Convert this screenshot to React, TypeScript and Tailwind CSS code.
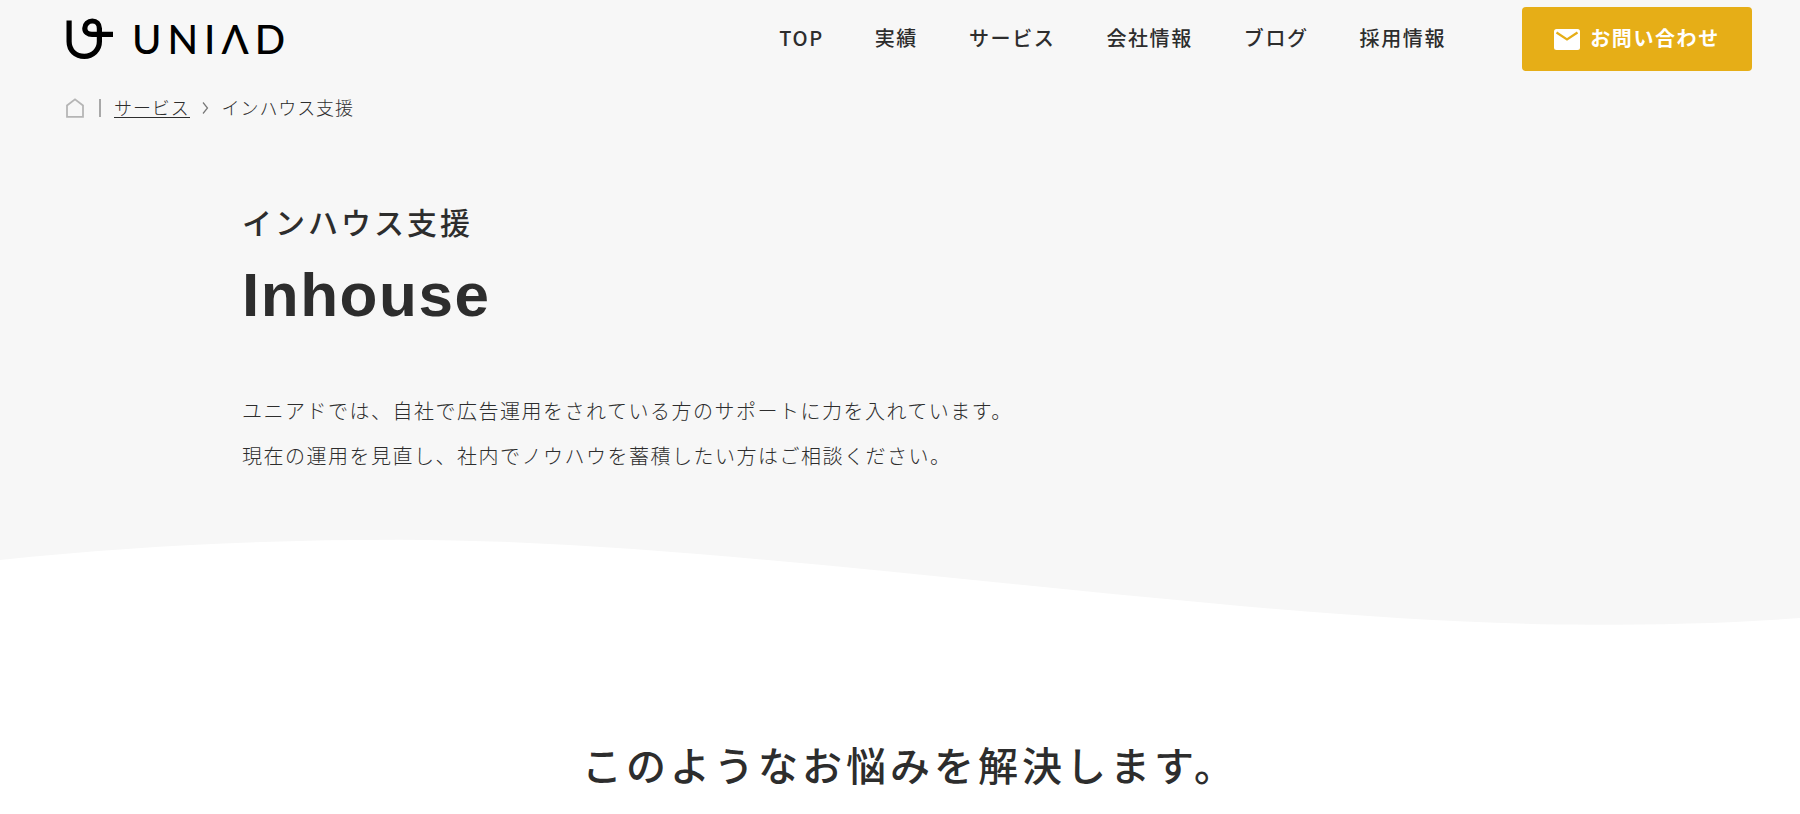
const navItems = ["TOP", "実績", "サービス", "会社情報", "ブログ", "採用情報"];

function Logo() {
  return (
    <a href="#" aria-label="UNIAD" className="flex items-center gap-[18px] text-black">
      <svg width="48" height="42" viewBox="0 0 48 42" fill="none" stroke="currentColor" strokeWidth="5.2">
        <path d="M3.1 2.5V23.5C3.1 32.5 9.8 38.3 18.3 38.3C26.8 38.3 33.4 32 33.4 23.5V10.5C33.4 6 30.4 3 26.3 3C22.2 3 18.8 6.200 18.8 10.200C18.8 14 22 16.400 26 16.400H47" />
      </svg>
      <span className="font-['Lato'] text-[40px] leading-[48px] font-medium tracking-[6px]">UNIΛD</span>
    </a>
  );
}

function Header() {
  return (
    <header className="flex items-center justify-between pt-[7px] pr-12 pl-[66px]">
      <Logo />
      <div className="flex items-center gap-[76px]">
        <nav aria-label="メイン" className="pb-[3px]">
          <ul className="flex gap-[51px] text-[20px] leading-8 font-medium tracking-[0.08em] whitespace-nowrap">
            {navItems.map((item) => (
              <li key={item}>
                <a href="#">{item}</a>
              </li>
            ))}
          </ul>
        </nav>
        <a
          href="#"
          className="flex h-16 w-[230px] items-center justify-center gap-[10px] rounded bg-[#e6ae17] text-[20px] leading-8 font-bold tracking-[0.08em] whitespace-nowrap text-white"
        >
          <svg width="26" height="21" viewBox="0 0 26 21" aria-hidden="true">
            <rect width="26" height="21" rx="2.5" fill="currentColor" />
            <path d="M2.500 3.500L13 10.500L23.500 3.500" fill="none" stroke="#e6ae17" strokeWidth="2.200" />
          </svg>
          <span className="pb-0.5">お問い合わせ</span>
        </a>
      </div>
    </header>
  );
}

function Breadcrumb() {
  return (
    <nav aria-label="パンくず" className="mt-6 pl-[66px]">
      <ol className="flex items-center text-[18px] leading-6 font-light tracking-wider">
        <li>
          <a href="#" aria-label="ホーム" className="block">
            <svg width="18" height="20" viewBox="0 0 18 20" fill="none" stroke="#b5b5b5" strokeWidth="1.800">
              <path d="M1 18.800V7.500L9 1.400L17 7.500V18.800Z" />
            </svg>
          </a>
        </li>
        <li className="ml-[15px] h-[18px] w-0.5 bg-[#a8a8a8]" aria-hidden="true" />
        <li className="ml-[13px] pb-0.5">
          <a href="#" className="block h-[21px] border-b border-[#2d2d2d] leading-[21px]">サービス</a>
        </li>
        <li className="ml-3" aria-hidden="true">
          <svg width="7" height="12" viewBox="0 0 7 12" fill="none" stroke="#777" strokeWidth="1.200">
            <path d="M1 0.500L5.500 6L1 11.500" />
          </svg>
        </li>
        <li className="ml-[13px] pb-0.5">インハウス支援</li>
      </ol>
    </nav>
  );
}

export default function App() {
  return (
    <div className="bg-white font-['Noto_Sans_CJK_JP',sans-serif] text-[#2d2d2d]">
      <div className="bg-[#f7f7f7]">
        <Header />
        <Breadcrumb />
        <section className="mt-20 px-[242px]">
          <p className="text-[30px] leading-10 font-medium tracking-widest">インハウス支援</p>
          <h1 className="mt-[18px] font-['Liberation_Sans',sans-serif] text-[62px] leading-[72px] font-bold tracking-wide">
            Inhouse
          </h1>
          <p className="mt-[57px] text-[20px] leading-[45px] font-light tracking-[0.075em]">
            ユニアドでは、自社で広告運用をされている方のサポートに力を入れています。
            <br />
            現在の運用を見直し、社内でノウハウを蓄積したい方はご相談ください。
          </p>
        </section>
        <svg
          className="mt-[60px] block h-[100px] w-full"
          viewBox="0 540 1800 100"
          preserveAspectRatio="none"
          aria-hidden="true"
        >
          <path
            d="M0 562C130 548 265 541.700 400 541.700C750 541.700 1240 626.700 1590 626.700C1665 626.700 1735 625 1800 620V641H0Z"
            fill="#fff"
          />
        </svg>
      </div>
      <section className="pt-24">
        <h2 className="pl-5 text-center text-[40px] leading-[60px] font-medium tracking-widest">
          このようなお悩みを解決します。
        </h2>
      </section>
    </div>
  );
}
